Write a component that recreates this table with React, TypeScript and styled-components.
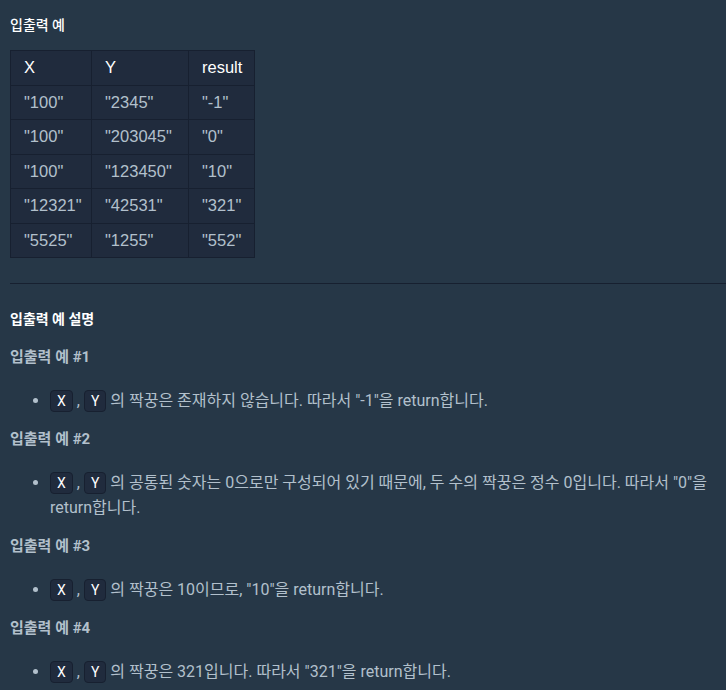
import { createGlobalStyle, styled } from 'styled-components';

const GlobalStyle = createGlobalStyle`
    html, body {
        margin: 0;
        padding: 0;
        background-color: #263747;
    }
    body {
        font-family: Roboto, 'Noto Sans CJK KR', sans-serif;
        color: #b2c0cc;
    }
`;

const rows = [
    ['"100"', '"2345"', '"-1"'],
    ['"100"', '"203045"', '"0"'],
    ['"100"', '"123450"', '"10"'],
    ['"12321"', '"42531"', '"321"'],
    ['"5525"', '"1255"', '"552"'],
];

const colWidths = [81, 97, 66];

export default function App() {
    return (
        <Page>
            <GlobalStyle />
            <Title $weight={500}>입출력 예</Title>
            <Table>
                <colgroup>
                    {colWidths.map((w, i) => (
                        <col key={i} style={{ width: w }} />
                    ))}
                </colgroup>
                <thead>
                    <tr>
                        <Th>X</Th>
                        <Th>Y</Th>
                        <Th>result</Th>
                    </tr>
                </thead>
                <tbody>
                    {rows.map((row, i) => (
                        <tr key={i}>
                            {row.map((cell, j) => (
                                <Td key={j}>{cell}</Td>
                            ))}
                        </tr>
                    ))}
                </tbody>
            </Table>
            <Divider />
            <Title $gap={16}>입출력 예 설명</Title>
            <SubTitle>입출력 예 #1</SubTitle>
            <List>
                <li>
                    <Code>X</Code> , <Code>Y</Code> 의 짝꿍은 존재하지 않습니다. 따라서 "-1"을 return합니다.
                </li>
            </List>
            <SubTitle>입출력 예 #2</SubTitle>
            <List>
                <li>
                    <Code>X</Code> , <Code>Y</Code> 의 공통된 숫자는 0으로만 구성되어 있기 때문에, 두 수의 짝꿍은 정수 0입니다. 따라서 "0"을
                    return합니다.
                </li>
            </List>
            <SubTitle>입출력 예 #3</SubTitle>
            <List>
                <li>
                    <Code>X</Code> , <Code>Y</Code> 의 짝꿍은 10이므로, "10"을 return합니다.
                </li>
            </List>
            <SubTitle>입출력 예 #4</SubTitle>
            <List>
                <li>
                    <Code>X</Code> , <Code>Y</Code> 의 짝꿍은 321입니다. 따라서 "321"을 return합니다.
                </li>
            </List>
        </Page>
    );
}

const Page = styled.div`
    padding: 14px 10px 0 10px;
    min-height: 100vh;
    box-sizing: border-box;
    background-color: #263747;
    font-size: 16px;
    line-height: 25px;
`;

const Title = styled.h5<{ $gap?: number; $weight?: number }>`
    margin: 0 0 ${(props) => props.$gap ?? 14}px 0;
    font-size: 14px;
    line-height: 22px;
    font-weight: ${(props) => props.$weight ?? 700};
    color: #ffffff;
`;

const SubTitle = styled.h6`
    margin: 0;
    font-size: 15px;
    line-height: 22px;
    font-weight: 700;
    color: #b2c0cc;
`;

const Table = styled.table`
    border-collapse: collapse;
    table-layout: fixed;
    width: 244px;
    background-color: #202b3d;
    border: 1px solid #172030;
    margin-bottom: 25px;
    font-family: 'Liberation Sans', Arial, sans-serif;
    font-size: 16.5px;
`;

const Th = styled.th`
    text-align: left;
    font-weight: 400;
    color: #ffffff;
    padding: 5px 0 5px 13px;
    line-height: 23.5px;
    white-space: nowrap;
    border: 1px solid #172030;
`;

const Td = styled.td`
    color: #b2c0cc;
    padding: 5px 0 5px 13px;
    line-height: 23.5px;
    white-space: nowrap;
    border: 1px solid #172030;
`;

const Divider = styled.hr`
    margin: 0 -10px 24px 0;
    border: none;
    border-top: 1px solid #172030;
`;

const List = styled.ul`
    margin: 20px 0 15px 0;
    padding-left: 40px;
    li::marker {
        color: #b2c0cc;
    }
`;

const Code = styled.code`
    display: inline-block;
    font-family: Roboto, 'Noto Sans CJK KR', sans-serif;
    font-size: 14px;
    line-height: 20px;
    color: #ffffff;
    background-color: #202b3d;
    border: 1px solid #172030;
    border-radius: 4px;
    padding: 0 6px;
`;
